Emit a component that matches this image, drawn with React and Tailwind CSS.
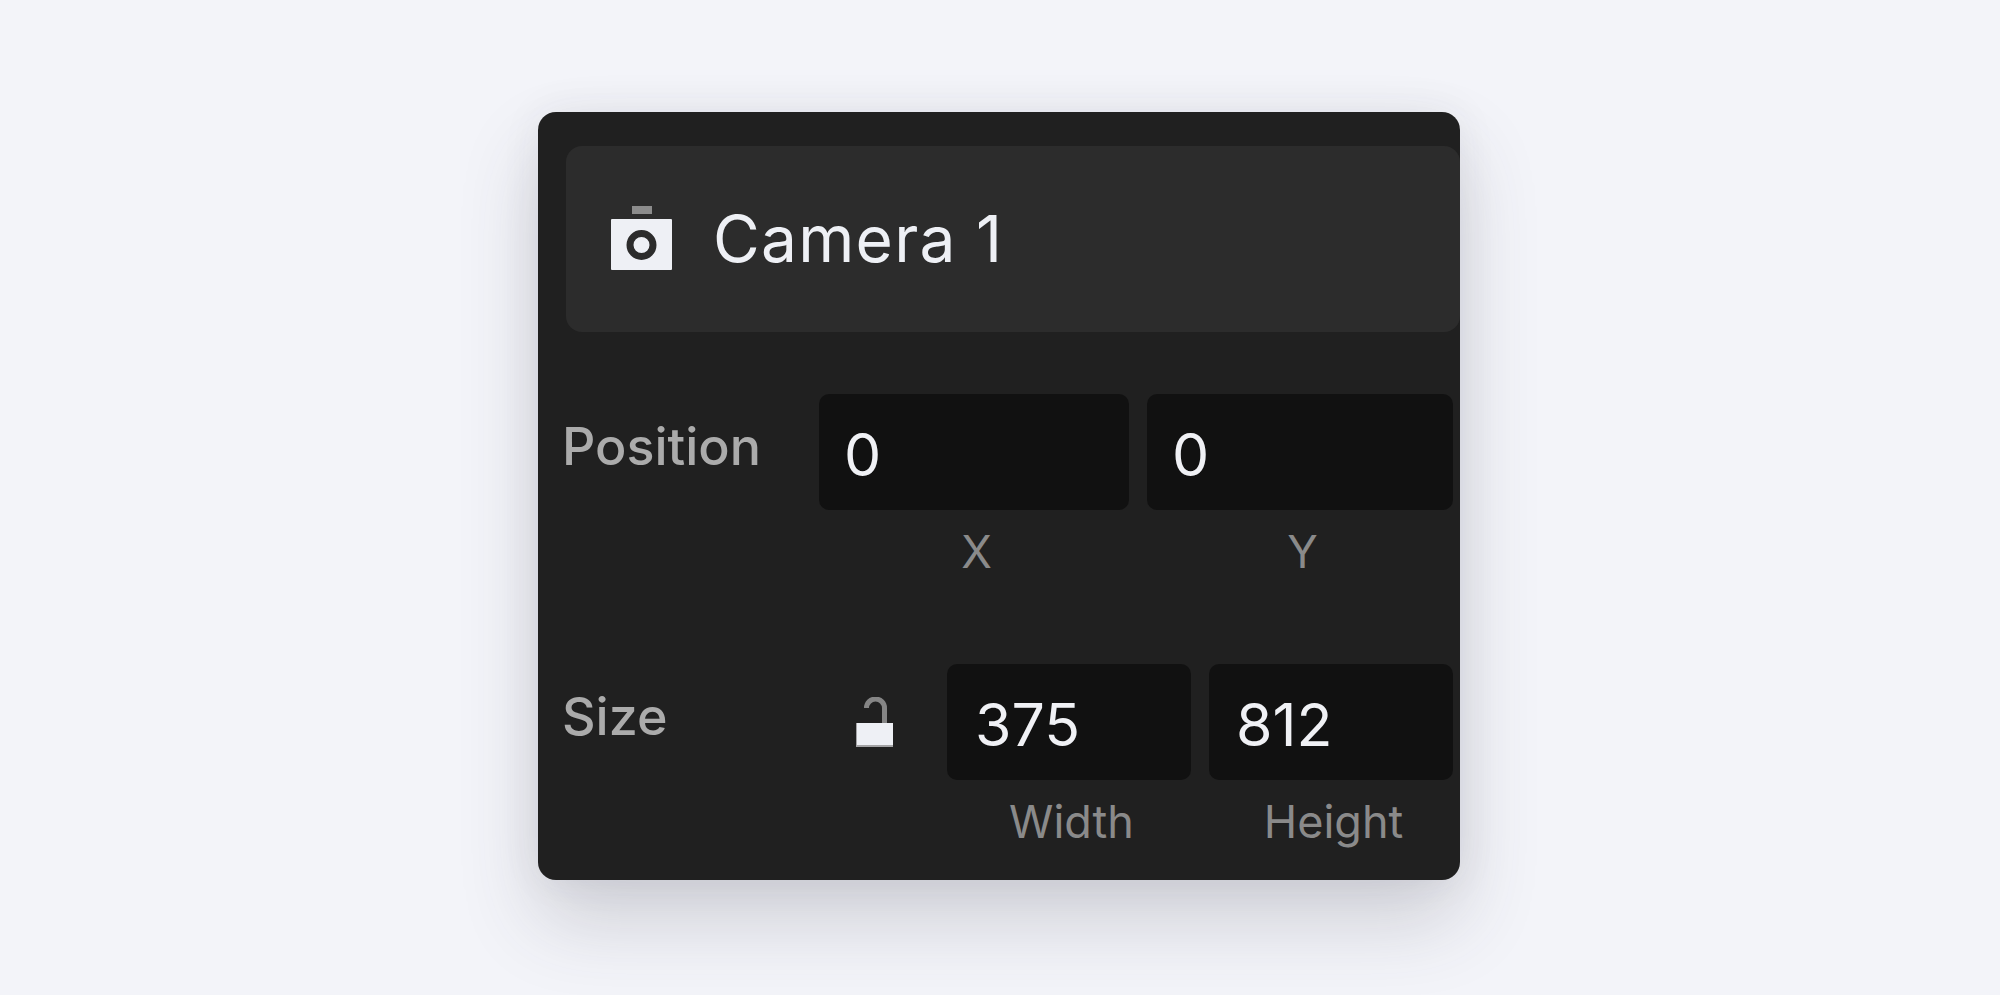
function CameraIcon() {
  return (
    <svg width="61" height="64" viewBox="0 0 61 64" className="mb-[2px] shrink-0">
      <rect x="21" y="0" width="20" height="8" fill="#8c8c8c" />
      <rect x="0" y="13" width="61" height="51" rx="1" fill="#eef0f5" />
      <circle cx="30.5" cy="39" r="11.5" fill="none" stroke="#2c2c2c" strokeWidth="7" />
    </svg>
  );
}

function LockIcon() {
  return (
    <svg width="37" height="50" viewBox="0 0 37 50" className="shrink-0">
      <path d="M10.5 11a9 9 0 0 1 18 0V26" fill="none" stroke="#858585" strokeWidth="5" />
      <rect x="0" y="26" width="37" height="24" fill="#a3a3a5" />
      <rect x="1" y="26" width="36" height="22" fill="#eef0f5" />
    </svg>
  );
}

function Field({ value, caption, width, inset }) {
  return (
    <div className={`flex flex-col ${width}`}>
      <div className={`flex h-[116px] items-center rounded-[10px] bg-[#111111] pt-[4px] text-[59px] leading-none text-[#f0f1f5] ${inset}`}>
        {value}
      </div>
      <div className="mt-[14px] pl-[5px] text-center text-[45px] leading-[56px] text-[#8a8a8a]">{caption}</div>
    </div>
  );
}

export default function App() {
  return (
    <main className="flex min-h-screen items-center justify-center bg-[#f3f4f9] pr-[2px] pb-[3px] font-['Inter',sans-serif]">
      <div className="flex h-[768px] w-[922px] flex-col overflow-hidden rounded-[18px] bg-[#202020] pt-[34px] pl-[24px] pr-[7px] shadow-[0_40px_80px_rgba(60,62,75,0.2),0_0_40px_rgba(60,62,75,0.07)]">
        {/* Kopfzeile */}
        <div className="-mr-[7px] ml-[4px] flex h-[186px] items-center gap-[41px] rounded-[16px] bg-[#2c2c2c] pl-[45px]">
          <CameraIcon />
          <span className="text-[64px] leading-none tracking-[0.02em] text-[#eef0f5]">Camera 1</span>
        </div>

        {/* Position */}
        <div className="mt-[62px] flex">
          <div className="flex h-[105px] w-[257px] items-center text-[52px] leading-none font-medium text-[#ababab]">Position</div>
          <div className="flex gap-[18px]">
            <Field value="0" caption="X" width="w-[310px]" inset="pl-[25px]" />
            <Field value="0" caption="Y" width="w-[306px]" inset="pl-[25px]" />
          </div>
        </div>

        {/* Size */}
        <div className="mt-[84px] flex">
          <div className="flex h-[105px] w-[294px] items-center text-[52px] leading-none font-medium text-[#ababab]">Size</div>
          <div className="flex h-[116px] w-[91px] items-center">
            <LockIcon />
          </div>
          <div className="flex gap-[18px]">
            <Field value="375" caption="Width" width="w-[244px]" inset="pl-[28px]" />
            <Field value="812" caption="Height" width="w-[244px]" inset="pl-[27px]" />
          </div>
        </div>
      </div>
    </main>
  );
}
